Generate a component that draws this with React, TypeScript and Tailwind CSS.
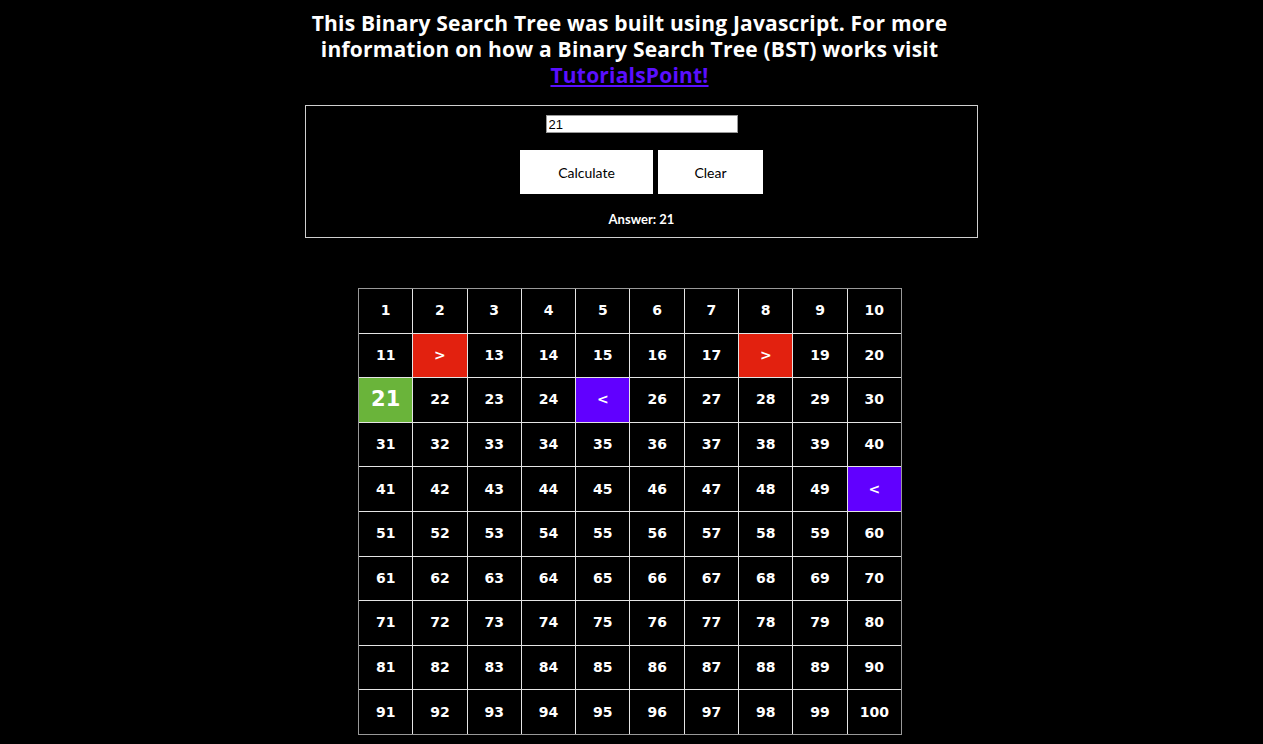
import React, { useState } from 'react';

const redCells = [12, 18];
const purpleCells = [25, 50];

const cellClass = (n: number) => {
  if (n === 21) return 'bg-[#6ab43a] text-[21px]';
  if (redCells.includes(n)) return 'bg-[#e2210f] text-[14px]';
  if (purpleCells.includes(n)) return 'bg-[#6100ff] text-[14px]';
  return 'bg-black text-[14px]';
};

const cellLabel = (n: number) => {
  if (redCells.includes(n)) return '>';
  if (purpleCells.includes(n)) return '<';
  return String(n);
};

const App: React.FC = () => {
  const [value, setValue] = useState('21');
  const numbers = Array.from({ length: 100 }, (_, i) => i + 1);

  return (
    <div className="min-h-[744px] bg-black text-white font-['Lato','Open_Sans',sans-serif] pt-[10px] pb-[10px]">
      {/* Heading */}
      <h1 className="w-[1259px] text-center font-['Open_Sans',sans-serif] text-[21px] font-bold leading-[26px] tracking-[0.2px]">
        This Binary Search Tree was built using Javascript. For more
        <br />
        information on how a Binary Search Tree (BST) works visit
        <br />
        <a href="#" className="text-[#5a0fff] underline">
          TutorialsPoint!
        </a>
      </h1>

      {/* Calculator */}
      <div className="ml-[305px] mt-[17px] flex w-[673px] h-[133px] flex-col items-center border border-[#cfcfcf] pt-[9px]">
        <input
          value={value}
          onChange={(e) => setValue(e.target.value)}
          className="h-[18px] w-[192px] border border-[#999] bg-white px-[2px] text-[13px] leading-[16px] text-black font-['Liberation_Sans',sans-serif]"
        />
        <div className="mt-[17px] flex gap-[5px]">
          <button className="h-[44px] w-[133px] bg-white text-[14px] text-black">Calculate</button>
          <button className="h-[44px] w-[105px] bg-white text-[14px] text-black">Clear</button>
        </div>
        <p className="mt-[16px] text-[13px] font-bold">Answer: 21</p>
      </div>

      {/* Grid */}
      <div className="ml-[358px] mt-[50px] grid h-[447px] w-[544px] grid-cols-10 grid-rows-10 gap-px border border-[#999] bg-[#e5e5e5] font-['DejaVu_Sans',sans-serif] font-bold">
        {numbers.map((n) => (
          <div key={n} className={`flex items-center justify-center ${cellClass(n)}`}>
            {cellLabel(n)}
          </div>
        ))}
      </div>
    </div>
  );
};

export default App;
